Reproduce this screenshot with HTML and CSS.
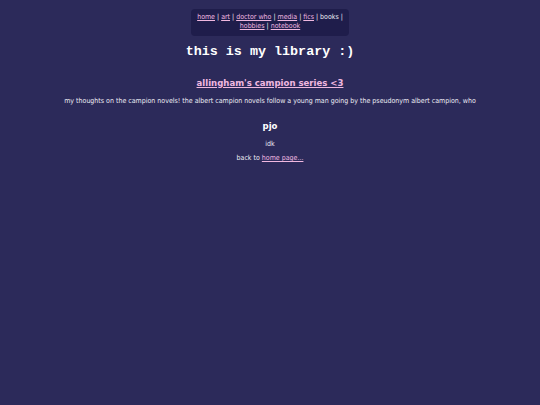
FILE: index.html
```html
<!DOCTYPE html>
<html>
<head>
<meta charset="utf-8">
<link rel="stylesheet" href="styles.css">
</head>
<body>
<nav class="nav">
  <a href="#">home</a> | <a href="#">art</a> | <a href="#">doctor who</a> | <a href="#">media</a> | <a href="#">fics</a> | books |<br>
  <a href="#">hobbies</a> | <a href="#">notebook</a>
</nav>
<h1 class="title">this is my library :)</h1>
<h2 class="series"><a href="#">allingham's campion series &lt;3</a></h2>
<p class="text intro">my thoughts on the campion novels! the albert campion novels follow a young man going by the pseudonym albert campion, who</p>
<h2 class="sub">pjo</h2>
<p class="text idk">idk</p>
<p class="text back">back to <a href="#">home page...</a></p>
</body>
</html>
```
FILE: styles.css
```css
html, body {
  margin: 0;
  padding: 0;
  background: #2c2a5a;
  height: 100%;
}
body {
  font-family: "DejaVu Sans Condensed", "DejaVu Sans", Verdana, sans-serif;
  font-stretch: condensed;
  color: #ececf4;
  text-align: center;
  padding-top: 9px;
  font-size: 7px;
}
a {
  color: #f0b8e0;
}
.nav {
  display: inline-block;
  background: #1f1d4b;
  border-radius: 4px;
  padding: 4px 6px 5px;
  line-height: 9px;
  font-size: 7px;
}
.title {
  font-family: "Liberation Mono", "Courier New", monospace;
  font-stretch: normal;
  font-size: 13.4px;
  font-weight: bold;
  margin: 8px 0 0;
  color: #ffffff;
}
.series {
  font-size: 9.5px;
  font-weight: bold;
  margin: 18px 0 0;
}
.series a { color: #f0b8e0; }
.text {
  margin: 8px 0 0;
}
.intro {
  margin-top: 9px;
}
.idk {
  margin-top: 9px;
}
.back {
  margin-top: 6px;
}
.sub {
  font-size: 9.5px;
  font-weight: bold;
  margin: 15px 0 0;
  color: #ffffff;
}
```
